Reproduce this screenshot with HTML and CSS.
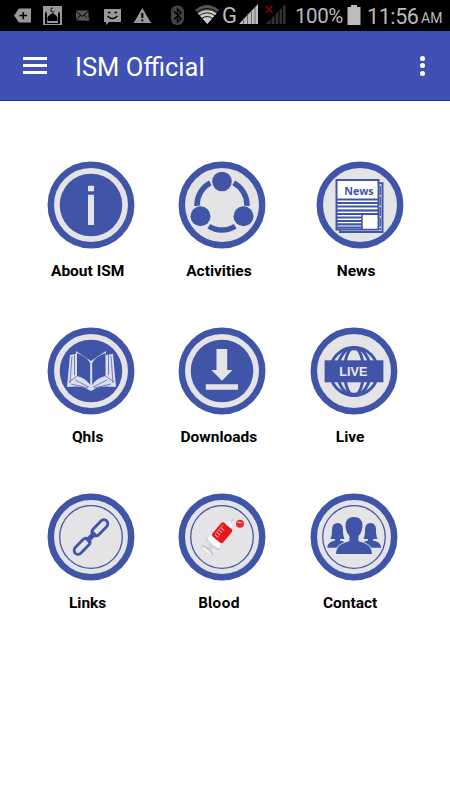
FILE: index.html
```html
<!DOCTYPE html>
<html lang="en">
<head>
    <meta charset="UTF-8">
    <meta name="viewport" content="width=device-width, initial-scale=1.0">
    <title>ISM Official</title>
    <link rel="stylesheet" href="styles.css">
</head>
<body>
    <div class="status">
        <svg class="notices" width="220" height="31" viewBox="0 0 220 31">
            <path fill="#999" d="M19 8.500H31V22.500H19L14 15.500Z"/>
            <path stroke="#000" stroke-width="1.700" d="M19.500 15.500H27M23.200 12V19.200"/>
            <rect x="43" y="6" width="19" height="19" fill="#999"/>
            <path fill="#000" d="M47.500 21V19Q47 16 52.500 13Q58 16 57.500 19V21ZM45 23V14L46 11L47 14V23ZM58 23V14L59 11L60 14V23Z"/>
            <path fill="none" stroke="#000" stroke-width="1" d="M53 8A2 2 0 1 0 54.500 11M45 23.500H60"/>
            <rect x="76" y="10.500" width="12.500" height="10" fill="#555"/>
            <path fill="none" stroke="#000" stroke-width="1" d="M76 11L82.200 16.500L88.500 11M76 20.500L80.500 15M84 15L87 18"/>
            <circle cx="87.500" cy="19" r="1.500" fill="none" stroke="#555"/>
            <path fill="#999" d="M104 9H121V22H109L106 25V22H104Z"/>
            <path fill="none" stroke="#000" stroke-width="1.500" d="M107.500 16Q112.500 21 117.500 16M108 12.500H110.500M114.500 12.500H117"/>
            <path fill="#999" d="M142.300 8L151 23H133.700Z"/>
            <path stroke="#000" stroke-width="2" d="M142.300 13V18M142.300 19.500V21.300"/>
            <rect x="171" y="5.500" width="13" height="19.500" rx="6" fill="#444"/>
            <path fill="none" stroke="#000" stroke-width="1.400" d="M174 11.500L181 18.500L177.500 22V9L181 12.500L174 19.500"/>
            <path fill="#555" d="M195 10Q207 0 219 10L207.300 24Z"/>
            <path fill="#ccc" d="M198 13.500Q207 7 216.500 13.500L207.300 24Z"/>
            <path fill="none" stroke="#000" stroke-width=".9" d="M196 12.500Q207 4.500 218 12.500M198.500 16Q207 9.500 215.500 16M201 19Q207 14 213.500 19"/>
        </svg>
        <span class="network">G</span>
        <svg class="signals" width="50" height="31" viewBox="0 0 50 31">
            <path fill="#bbb" d="M1 24L20 4V24Z"/>
            <path stroke="#555" stroke-width=".8" d="M5.500 18V24M9.500 14V24M13.500 10V24M17 7V24"/>
            <path fill="#333" d="M28 24L47.500 4V24Z"/>
            <path stroke="#000" stroke-width="1.200" d="M33 18V24M37 14V24M41 10V24M44.500 7V24"/>
            <path stroke="#920000" stroke-width="1.600" d="M28 6L34.500 12.500M34.500 6L28 12.500"/>
        </svg>
        <span class="percent">100%</span>
        <svg class="battery" width="14" height="31" viewBox="0 0 14 31">
            <path fill="#bbb" d="M4 5H10V7H13.500V25H.5V7H4Z"/>
        </svg>
        <span class="clock">11:56</span>
        <span class="ampm">AM</span>
    </div>

    <div class="bar">
        <div class="menu">
            <i></i>
            <i></i>
            <i></i>
        </div>
        <h1 class="title">ISM Official</h1>
        <div class="more">
            <i></i>
            <i></i>
            <i></i>
        </div>
    </div>

    <div class="grid">
        <div class="row">
            <div class="item">
                <svg class="icon" viewBox="0 0 88 88">
                    <circle class="ring" cx="44" cy="44" r="40.200"/>
                    <circle class="blue" cx="44" cy="44" r="31.300"/>
                    <path class="gray" d="M41 24.700H47V30.300H41ZM41 33.700H47V64H41Z"/>
                </svg>
                <span class="label">About ISM</span>
            </div>
            <div class="item">
                <svg class="icon" viewBox="0 0 88 88">
                    <circle class="ring" cx="44" cy="44" r="40.200"/>
                    <circle class="line" cx="44" cy="44" r="25" stroke-width="5.500" pathLength="360" stroke-dasharray="64 56" stroke-dashoffset="-58"/>
                    <circle class="blue" cx="44" cy="20.500" r="9.800"/>
                    <circle class="blue" cx="22.500" cy="55.300" r="10"/>
                    <circle class="blue" cx="65.500" cy="55.300" r="10"/>
                </svg>
                <span class="label">Activities</span>
            </div>
            <div class="item last">
                <svg class="icon" viewBox="0 0 88 88">
                    <circle class="ring" cx="44" cy="44" r="40.200"/>
                    <path class="line" fill="#fff" stroke-width="2" d="M24 22.300H66.500V71H24Z"/>
                    <path class="line" stroke-width="1.300" stroke-dasharray="9 1.500" d="M64.300 25V69"/>
                    <rect class="line page" x="20.500" y="19" width="42" height="49.500" stroke-width="2"/>
                    <path class="line" stroke-width="2.200" d="M21 38.500H62M21 42H62M21 45.500H62M21 49.500H62M21 53H62M21 56.500H46M21 60H46M21 63.300H46M21 66.500H46"/>
                    <path class="line" stroke-width="1.500" d="M21 49.500H62M46 54V68"/>
                    <rect x="47" y="56" width="14" height="11.500" fill="#fff"/>
                    <text class="news" x="28.200" y="33.500" textLength="29.500" lengthAdjust="spacingAndGlyphs">News</text>
                </svg>
                <span class="label">News</span>
            </div>
        </div>

        <div class="row">
            <div class="item">
                <svg class="icon" viewBox="0 0 88 88">
                    <circle class="ring" cx="44" cy="44" r="40.200"/>
                    <circle class="blue" cx="44" cy="44" r="31.300"/>
                    <path fill="#dcdef2" d="M29 24L44 34L59 24V28L66 27L69 60Q52 58 47 62.500L44 64L41 62.500Q35 58 20 60L23 28L29 27Z"/>
                    <path class="blue" d="M30 26Q40 30 43.200 36V58Q38 50.500 30 49ZM58.500 26Q48 30 45.200 36V58Q50 50.500 58.500 49Z"/>
                    <path class="line" stroke-width=".7" d="M25 29L23 56M27.500 28V48M64 29L66 56M61.500 28V48M30 49L22 55M58.500 49L67 55M24 57L41 61M28 53L42 60M64 57L47 61M60 53L46 60"/>
                </svg>
                <span class="label">Qhls</span>
            </div>
            <div class="item">
                <svg class="icon" viewBox="0 0 88 88">
                    <circle class="ring" cx="44" cy="44" r="40.200"/>
                    <circle class="blue" cx="44" cy="44" r="31.300"/>
                    <path class="gray" d="M38.500 22H49.200V43H54.500L44 53.700L33.300 43H38.500ZM27.800 57.300H60V62.700H27.800Z"/>
                </svg>
                <span class="label">Downloads</span>
            </div>
            <div class="item">
                <svg class="icon" viewBox="0 0 88 88">
                    <circle class="ring" cx="44" cy="44" r="40.200"/>
                    <g class="line" stroke-width="3">
                        <circle cx="44" cy="44.500" r="24"/>
                        <ellipse cx="44" cy="44.500" rx="16.500" ry="24"/>
                        <ellipse cx="44" cy="44.500" rx="9.500" ry="24"/>
                    </g>
                    <path class="line" stroke-width="3.500" d="M35 23.500Q44 19.500 53 23.500M35 65.500Q44 69.500 53 65.500"/>
                    <rect class="blue" x="14.600" y="33.300" width="58.800" height="22"/>
                    <text class="live" x="29.300" y="48.500" textLength="28" lengthAdjust="spacingAndGlyphs">LIVE</text>
                </svg>
                <span class="label">Live</span>
            </div>
        </div>

        <div class="row">
            <div class="item">
                <svg class="icon" viewBox="0 0 88 88">
                    <circle class="ring" cx="44" cy="44" r="40.200"/>
                    <circle class="line" cx="44" cy="44" r="31.300" stroke-width="1.300"/>
                    <g class="line" stroke-width="2.800" transform="translate(44 44) rotate(-46)">
                        <rect x="3" y="-4" width="19.500" height="8" rx="4"/>
                        <rect x="-22.500" y="-4" width="19.500" height="8" rx="4"/>
                        <path stroke-width="5" d="M-6 0H6"/>
                    </g>
                </svg>
                <span class="label">Links</span>
            </div>
            <div class="item">
                <svg class="icon" viewBox="0 0 88 88">
                    <circle class="ring" cx="44" cy="44" r="40.200"/>
                    <circle class="line" cx="44" cy="44" r="31.300" stroke-width="1.300"/>
                    <g transform="translate(43.500 40.500) rotate(-50)">
                        <path fill="#d3d3d7" d="M-22 -2.500H-14V2.500H-22Z"/>
                        <ellipse cx="-22" cy="0" rx="2.500" ry="7.500" fill="#c9c9cd"/>
                        <ellipse cx="-22.800" cy="0" rx="1.300" ry="6" fill="#f4f4f5"/>
                        <rect x="-14" y="-6.500" width="9" height="13" fill="#f3f3f5"/>
                        <ellipse cx="-13.500" cy="0" rx="3" ry="9.500" fill="#d5d5d9"/>
                        <ellipse cx="-12" cy="0" rx="2" ry="8" fill="#fff"/>
                        <rect x="-8" y="-7" width="18" height="14" rx="2.500" fill="#e5191c"/>
                        <path stroke="#f4605c" stroke-width="1.200" d="M-5 -4.500H8"/>
                        <path stroke="#fbb" stroke-width="1" d="M-5 -4V0M-2 -4V0M1 -4V0M4 -4V0"/>
                        <rect x="10" y="-3" width="4" height="6" fill="#f7f7f9"/>
                        <path stroke="#ccc" stroke-width="1" d="M14 0H19"/>
                    </g>
                    <circle cx="62" cy="30.800" r="4" fill="#e62b2d"/>
                    <path stroke="#ffb0ae" stroke-width="1" d="M59 29L64 30"/>
                </svg>
                <span class="label blood">Blood</span>
            </div>
            <div class="item">
                <svg class="icon" viewBox="0 0 88 88">
                    <circle class="ring" cx="44" cy="44" r="40.200"/>
                    <circle class="line" cx="44" cy="44" r="31.300" stroke-width="1.300"/>
                    <path class="blue" d="M17.200 54.700Q17.500 49 25 47.500V46H20.500Q22 43 22 37Q22 30 27.500 30Q33 30 33 37Q33 43 34.500 46H30V47.500L35 49V54.700Z"/>
                    <path class="blue" d="M71.200 54.700Q70.900 49 63 47.500V46H67.500Q66 43 66 37Q66 30 60.500 30Q55 30 55 37Q55 43 53.500 46H58V47.500L53 49V54.700Z"/>
                    <path fill="#e4e4e6" stroke="#e4e4e6" stroke-width="1.400" d="M26 61Q26 53 33 50.500L39.500 48V43Q35.500 39 35.500 32Q36 24 44 24Q52 24 52.500 32Q52.500 39 48.500 43V48L55 50.500Q62 53 62 61Z"/>
                    <path class="blue" d="M26 61Q26 53 33 50.500L39.500 48V43Q35.500 39 35.500 32Q36 24 44 24Q52 24 52.500 32Q52.500 39 48.500 43V48L55 50.500Q62 53 62 61Z"/>
                </svg>
                <span class="label">Contact</span>
            </div>
        </div>
    </div>
</body>
</html>
```
FILE: styles.css
```css
* {
    padding: 0;
    margin: 0;
    box-sizing: border-box;
}
body {
    width: 450px;
    height: 800px;
    overflow: hidden;
    background-color: #fff;
    font-family: Roboto, "Liberation Sans", sans-serif;
}
svg {
    display: block;
    flex: none;
}

/* status bar */
.status {
    display: flex;
    height: 31px;
    background-color: #000;
    color: #bbb;
    line-height: 33px;
    white-space: nowrap;
}
.network {
    width: 18px;
    padding-left: 2px;
    font-size: 22px;
    line-height: 31px;
}
.percent {
    width: 53px;
    margin-left: 7px;
    font-size: 20.500px;
    letter-spacing: -.4px;
}
.battery {
    margin-left: -1px;
}
.clock {
    width: 53px;
    margin-left: 6px;
    font-size: 21.500px;
    letter-spacing: -.4px;
}
.ampm {
    margin-left: 1px;
    font-size: 14px;
    line-height: 37px;
}

/* app bar */
.bar {
    display: flex;
    align-items: center;
    height: 70px;
    padding: 0 25px 0 23px;
    border-bottom: 1px solid #0c39ad;
    background-color: #3f51b5;
}
.menu {
    display: flex;
    flex-direction: column;
    gap: 4px;
    width: 24px;
}
.menu i {
    height: 3px;
    background-color: #fff;
}
.title {
    flex: 1;
    padding: 3px 0 0 28px;
    color: #fff;
    font-size: 25.500px;
    font-weight: 400;
    line-height: 67px;
}
.more {
    display: flex;
    flex-direction: column;
    gap: 2.500px;
}
.more i {
    width: 5px;
    height: 5px;
    border-radius: 50%;
    background-color: #fff;
}

/* icon grid */
.grid {
    padding: 60px 0 0 22px;
}
.row {
    display: flex;
    height: 166px;
}
.item {
    width: 131.250px;
    text-align: center;
}
.last {
    margin-left: 6px;
}
.icon {
    width: 88px;
    height: 88px;
    margin-left: 25.200px;
}
.label {
    display: block;
    margin-top: 12px;
    color: #000;
    font-size: 15.500px;
    font-weight: 700;
    line-height: 20px;
}
.blood {
    margin-top: 11px;
    font-family: "Noto Sans CJK SC", sans-serif;
    font-size: 14.500px;
}
.ring {
    fill: #e4e4e6;
    stroke: #4054a8;
    stroke-width: 6.500;
}
.blue {
    fill: #4054a8;
}
.gray {
    fill: #e4e4e6;
}
.line {
    fill: none;
    stroke: #4054a8;
}
.page {
    fill: #fff;
}
.news {
    fill: #4054a8;
    font: bold 11px "Open Sans", sans-serif;
}
.live {
    fill: #e9e9f3;
    font: bold 12px "Liberation Sans", sans-serif;
}
```
